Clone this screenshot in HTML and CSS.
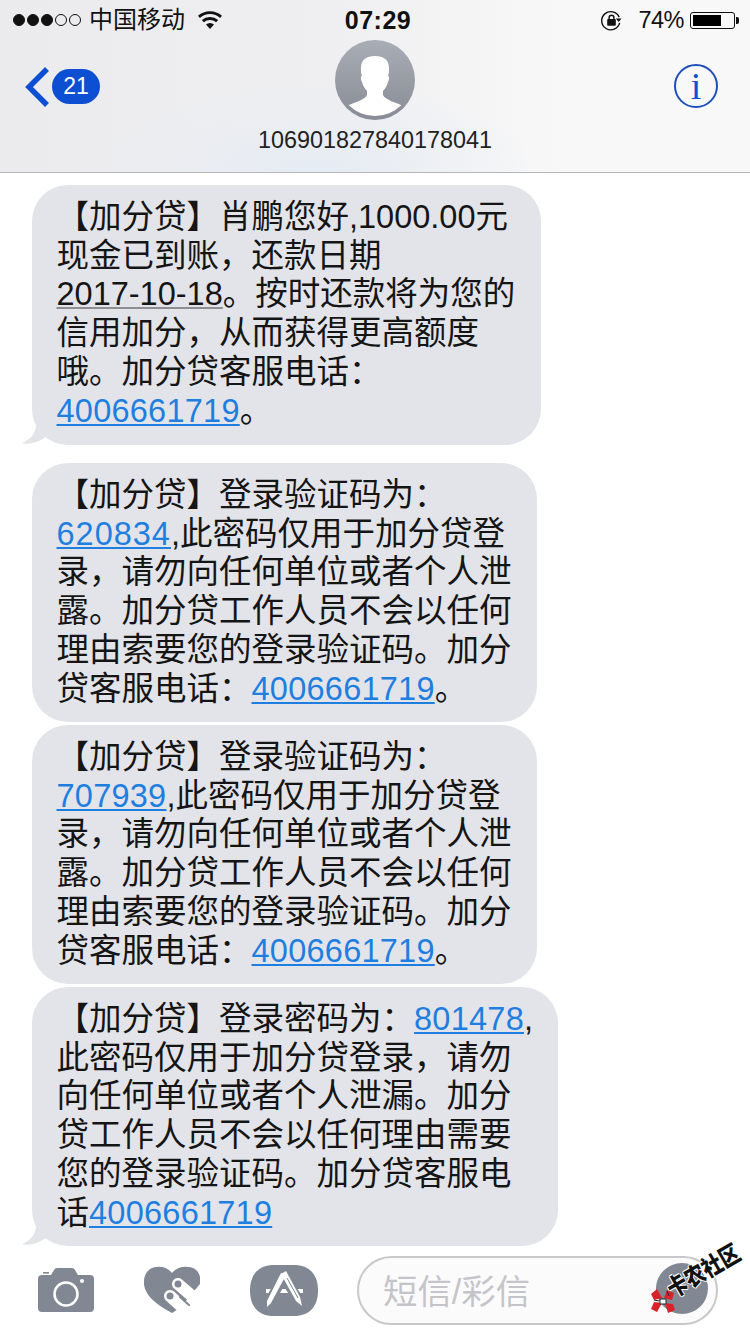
FILE: index.html
```html
<!DOCTYPE html>
<html lang="zh-CN">
<head>
<meta charset="UTF-8" />
<title>信息</title>
<link rel="stylesheet" href="styles.css">
</head>
<body>
<div class="phone">
  <header class="top">
    <div class="status">
      <div class="status-left">
        <span class="signal"><i class="on"></i><i class="on"></i><i class="on"></i><i></i><i></i></span>
        <span class="carrier">中国移动</span>
        <svg class="wifi" viewBox="0 0 24 18"><path d="M12 18 8 13.6a6 6 0 0 1 8 0zM5.9 11.3 3.8 9a12.4 12.4 0 0 1 16.4 0l-2.1 2.3a9.2 9.2 0 0 0-12.2 0zM1.9 6.9 0 4.8a18 18 0 0 1 24 0l-1.900 2.100a15.200 15.200 0 0 0-20.200 0z" fill="#111"/></svg>
      </div>
      <div class="clock">07:29</div>
      <div class="status-right">
        <svg class="lock" viewBox="0 0 24 24"><path d="M20.500 14.500A9.500 9.500 0 1 1 20 8.500" fill="none" stroke="#111" stroke-width="1.500"/><path d="M17.500 9h6l-3 3.500z" fill="#111" transform="translate(-1 1)"/><rect x="7.500" y="10.500" width="9" height="7" rx="1" fill="#111"/><path d="M9.500 10.500V9a2.500 2.500 0 0 1 5 0v1.500" fill="none" stroke="#111" stroke-width="1.500"/></svg>
        <span class="percent">74%</span>
        <span class="battery"><span class="battery-fill"></span></span>
        <span class="battery-nub"></span>
      </div>
    </div>
    <div class="nav">
      <div class="nav-left">
        <svg class="chevron" viewBox="0 0 26 42"><path d="M23 3 5 21l18 18" fill="none" stroke="#0d4fd2" stroke-width="5.500"/></svg>
        <span class="badge">21</span>
      </div>
      <div class="contact">
        <svg class="avatar" viewBox="0 0 80 80">
          <defs>
            <linearGradient id="avatarBg" x1="0" y1="0" x2="0" y2="1"><stop offset="0" stop-color="#a9adb6"/><stop offset="1" stop-color="#888c96"/></linearGradient>
            <clipPath id="avatarClip"><circle cx="40" cy="39" r="37"/></clipPath>
          </defs>
          <circle cx="40" cy="40" r="40" fill="url(#avatarBg)"/>
          <path clip-path="url(#avatarClip)" d="M40 16c-9 0-14 4-14 12 0 3 0 6 1 8-2 0-1 4 0 6l1 3c1 2 3 5 4 6v4c-2 4-8 6-18 10-3 1-5 3-7 6v12h66V71c-2-3-4-5-7-6-10-4-16-6-18-10v-4c1-1 3-4 4-6l1-3c1-2 2-6 0-6 1-2 1-5 1-8 0-8-5-12-14-12z" fill="#fff"/>
        </svg>
        <div class="number">106901827840178041</div>
      </div>
      <div class="nav-right">
        <span class="info">i</span>
      </div>
    </div>
  </header>

  <main class="thread">
    <div class="bubble bubble-a has-tail">
      【加分贷】肖鹏您好,1000.00元<br>
      现金已到账，还款日期<br>
      <span class="date">2017-10-18</span>。按时还款将为您的<br>
      信用加分，从而获得更高额度<br>
      哦。加分贷客服电话：<br>
      <a class="link">4006661719</a>。
      <svg class="tail" viewBox="0 0 24 20"><path d="M14 0C14 8 8 15 0 18c7 2 15 0 24-6z" fill="#e3e4e9"/></svg>
    </div>
    <div class="bubble bubble-b gap-big">
      【加分贷】登录验证码为：<br>
      <a class="link code-wide">620834</a>,此密码仅用于加分贷登<br>
      录，请勿向任何单位或者个人泄<br>
      露。加分贷工作人员不会以任何<br>
      理由索要您的登录验证码。加分<br>
      贷客服电话：<a class="link">4006661719</a>。
    </div>
    <div class="bubble bubble-b">
      【加分贷】登录验证码为：<br>
      <a class="link">707939</a>,此密码仅用于加分贷登<br>
      录，请勿向任何单位或者个人泄<br>
      露。加分贷工作人员不会以任何<br>
      理由索要您的登录验证码。加分<br>
      贷客服电话：<a class="link">4006661719</a>。
    </div>
    <div class="bubble bubble-c has-tail">
      【加分贷】登录密码为：<a class="link">801478</a>,<br>
      此密码仅用于加分贷登录，请勿<br>
      向任何单位或者个人泄漏。加分<br>
      贷工作人员不会以任何理由需要<br>
      您的登录验证码。加分贷客服电<br>
      话<a class="link">4006661719</a>
      <svg class="tail" viewBox="0 0 24 20"><path d="M14 0C14 8 8 15 0 18c7 2 15 0 24-6z" fill="#e3e4e9"/></svg>
    </div>
  </main>

  <footer class="composer">
    <svg class="tool camera" viewBox="0 0 56 44">
      <rect x="5" y="4" width="6" height="1.600" fill="#828893"/>
      <path d="M0 11a4 4 0 0 1 4-4h9l3-5a4 4 0 0 1 3-2h15a4 4 0 0 1 3 2l3 5h12a4 4 0 0 1 4 4v29a4 4 0 0 1-4 4H4a4 4 0 0 1-4-4z" fill="#828893"/>
      <circle cx="28" cy="26" r="11.500" fill="none" stroke="#fff" stroke-width="2.500"/>
      <circle cx="44" cy="13" r="2" fill="#fff"/>
    </svg>
    <svg class="tool heart" viewBox="0 0 56 48">
      <path d="M28 7C23 0 13-1 6 3-1 8-2 19 3 27c5 8 14 14 25 20l8-5 20-24c1-6 0-11-5-15C44-1 33 0 28 7z" fill="#828893"/>
      <g fill="none" stroke-linecap="round">
        <path d="M34 18 62 42" stroke="#fff" stroke-width="12"/>
        <path d="M26 30 48 50" stroke="#fff" stroke-width="12"/>
        <path d="M36 31 45 39" stroke="#828893" stroke-width="2"/>
      </g>
      <circle cx="34" cy="18" r="3.500" fill="#828893"/>
      <circle cx="26" cy="30" r="3.500" fill="#828893"/>
    </svg>
    <svg class="tool store" viewBox="0 0 68 51">
      <path d="M24 0h20c15 0 24 9 24 25.500S59 51 44 51H24C9 51 0 42 0 25.500S9 0 24 0z" fill="#828893"/>
      <path d="M16 26h37" stroke="#fff" stroke-width="4"/>
      <path d="M36 7 17 41M30 7 53 41" stroke="#828893" stroke-width="10"/>
      <path d="M36 10 21 38 17 42 17 36 31 8z" fill="#fff"/>
      <path d="M31 9 36 6 50 32 52 41 46 36z" fill="#fff"/>
      <path d="M37 13 48 33" stroke="#828893" stroke-width="1"/>
    </svg>
    <div class="field">
      <span class="placeholder">短信/彩信</span>
      <span class="mic"></span>
    </div>
  </footer>

  <div class="watermark">
    <svg class="ribbon" viewBox="0 0 26 26">
      <path d="M12 10 7 1 1 6l3 6zM14 10l3-8 7 3-2 7zM12 15l-8-1-3 7 6 3zM15 15l8 1 2 6-7 3z" fill="#d8232a"/>
      <path d="M10 11h6v5h-6zM4 12l5 1M17 3l2 5" stroke="#222" stroke-width="1" fill="#fff"/>
    </svg>
    <span class="mark-text">卡农社区</span>
  </div>
</div>
</body>
</html>
```

FILE: styles.css
```css
/* Base */
body {
  margin: 0;
  background: #fff;
  font-family: "Liberation Sans", "Noto Sans CJK SC", sans-serif;
  color: #111;
}

.phone {
  position: relative;
  width: 750px;
  height: 1334px;
  overflow: hidden;
  display: flex;
  flex-direction: column;
  background: #fff;
}

/* Header */
.top {
  height: 172px;
  flex: none;
  border-bottom: 1px solid #b5b6ba;
  background:
    radial-gradient(ellipse 220px 90px at 42% 100%, #e6ecf4, rgba(230, 236, 244, 0) 100%),
    linear-gradient(90deg, #ebebed 0%, #efeff1 45%, #f8f8f8 75%, #f8f8f8 100%);
}

.status {
  height: 40px;
  display: grid;
  grid-template-columns: 1fr auto 1fr;
  align-items: center;
}

.status-left {
  display: flex;
  align-items: center;
  padding-left: 13px;
}

.signal {
  display: flex;
  gap: 2px;
  width: 76px;
}

.signal i {
  width: 10px;
  height: 10px;
  border: 1px solid #111;
  border-radius: 50%;
  box-sizing: content-box;
}

.signal i.on {
  background: #111;
}

.carrier {
  font-size: 24px;
  line-height: 40px;
}

.wifi {
  width: 24px;
  height: 18px;
  margin-left: 13px;
}

.clock {
  font-size: 25px;
  font-weight: 700;
  letter-spacing: 0.5px;
  padding-left: 6px;
}

.status-right {
  display: flex;
  align-items: center;
  justify-content: flex-end;
  padding-right: 11px;
}

.lock {
  width: 23px;
  height: 23px;
}

.percent {
  font-size: 23.5px;
  letter-spacing: -0.5px;
  margin-left: 15px;
  margin-right: 6px;
}

.battery {
  width: 45px;
  height: 17px;
  border: 1px solid #111;
  border-radius: 3px;
  padding: 2px;
  box-sizing: border-box;
  display: block;
}

.battery-fill {
  display: block;
  width: 73%;
  height: 100%;
  background: #000;
}

.battery-nub {
  width: 3px;
  height: 7px;
  background: #111;
  border-radius: 0 2px 2px 0;
  margin-left: 1px;
}

.nav {
  display: grid;
  grid-template-columns: 1fr auto 1fr;
}

.nav-left {
  display: flex;
  align-items: center;
  height: 92px;
  padding-left: 24px;
  box-sizing: border-box;
}

.chevron {
  width: 26px;
  height: 42px;
  margin-top: 1px;
}

.badge {
  width: 48px;
  height: 35px;
  margin-left: 2px;
  border-radius: 18px;
  background: #0d4fd2;
  color: #fff;
  font-size: 23px;
  line-height: 35px;
  text-align: center;
}

.contact {
  display: flex;
  flex-direction: column;
  align-items: center;
}

.avatar {
  width: 80px;
  height: 80px;
  display: block;
}

.number {
  font-size: 23.4px;
  line-height: 40px;
  color: #222;
}

.nav-right {
  display: flex;
  justify-content: flex-end;
  padding: 24px 32px 0 0;
}

.info {
  width: 44px;
  height: 44px;
  box-sizing: border-box;
  border: 2px solid #1f4fb8;
  border-radius: 50%;
  color: #0d4fd2;
  font-family: "Liberation Serif", serif;
  font-size: 38px;
  line-height: 40px;
  text-align: center;
}

/* Messages */
.thread {
  flex: 1;
  display: flex;
  flex-direction: column;
  align-items: flex-start;
  gap: 3px;
  padding: 12px 0 0 32px;
}

.bubble {
  position: relative;
  height: 259px;
  padding: 13px 0 0 24.5px;
  box-sizing: border-box;
  background: #e3e4e9;
  border-radius: 36px;
  font-size: 32.5px;
  line-height: 38.7px;
  white-space: nowrap;
  color: #151515;
}

.bubble-a {
  width: 509px;
  height: 260px;
}

.bubble-b {
  width: 505px;
}

.bubble-c {
  width: 526px;
}

.gap-big {
  margin-top: 15px;
}

.tail {
  position: absolute;
  left: -10px;
  bottom: 0;
  width: 24px;
  height: 20px;
}

.date {
  text-decoration: underline;
  text-decoration-color: #8d8d92;
  text-decoration-thickness: 2px;
  text-underline-offset: 2px;
}

.link {
  color: #1f7fe0;
  text-decoration: underline;
  text-decoration-thickness: 2px;
  text-underline-offset: 2px;
  letter-spacing: 0.25px;
}

.code-wide {
  letter-spacing: 1px;
}

/* Bottom bar */
.composer {
  height: 88px;
  flex: none;
  display: flex;
  align-items: center;
  position: relative;
  padding: 0 32px 0 38px;
}

.tool {
  display: block;
  flex: none;
}

.camera {
  width: 56px;
  height: 44px;
}

.heart {
  width: 56px;
  height: 48px;
  margin-left: 50px;
}

.store {
  width: 68px;
  height: 51px;
  margin-left: 50px;
}

.field {
  width: 361px;
  height: 69px;
  margin-left: 39px;
  box-sizing: border-box;
  border: 2px solid #c9c9cc;
  border-radius: 35px;
  background: #fbfbfc;
  display: flex;
  align-items: center;
  justify-content: space-between;
  padding: 0 8px 3px 24px;
}

.placeholder {
  font-size: 34.4px;
  color: #c5c5c9;
}

.mic {
  width: 52px;
  height: 51px;
  border-radius: 50%;
  background: #828893;
}

/* Watermark on top of the send button */
.watermark {
  position: absolute;
  left: 648px;
  top: 1244px;
  width: 100px;
  height: 74px;
}

.ribbon {
  position: absolute;
  left: 2px;
  bottom: 4px;
  width: 26px;
  height: 26px;
}

.mark-text {
  position: absolute;
  left: 15px;
  top: 14px;
  font-family: "Noto Sans CJK SC", sans-serif;
  font-size: 20px;
  font-weight: 900;
  line-height: 24px;
  white-space: nowrap;
  color: #111;
  transform: rotate(-30deg) scaleY(1.2);
  text-shadow: 1px 0 #fff, -1px 0 #fff, 0 1px #fff, 0 -1px #fff;
}
```
